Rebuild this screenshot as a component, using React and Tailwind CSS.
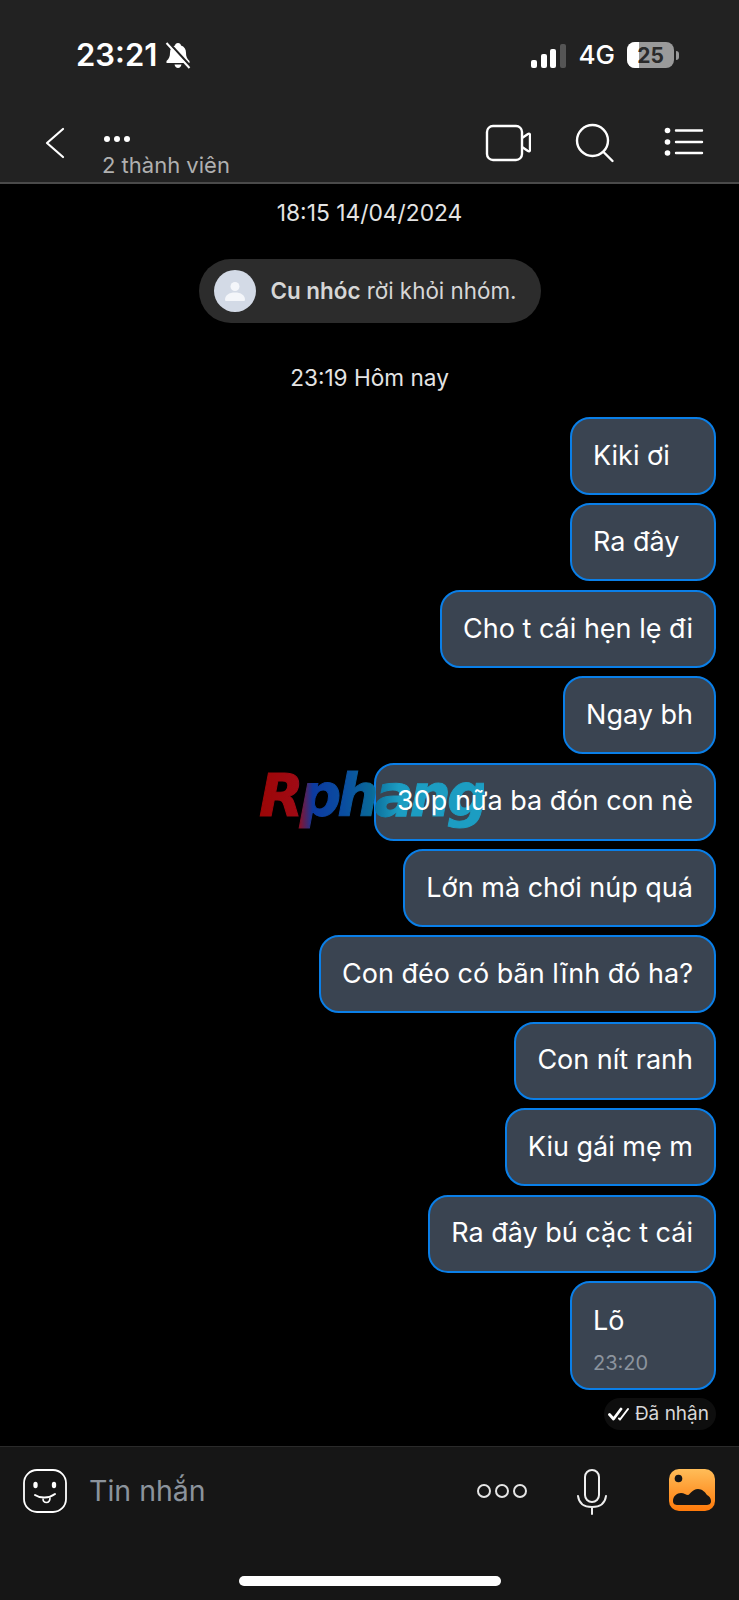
import React from 'react';

const messages = [
  'Kiki ơi',
  'Ra đây',
  'Cho t cái hẹn lẹ đi',
  'Ngay bh',
  '30p nữa ba đón con nè',
  'Lớn mà chơi núp quá',
  'Con đéo có bãn lĩnh đó ha?',
  'Con nít ranh',
  'Kiu gái mẹ m',
  'Ra đây bú cặc t cái',
];

function StatusBar() {
  return (
    <div className="h-[106px] flex items-start justify-between pt-[37px] pl-[76px] pr-[60px]">
      <div className="flex items-center gap-[8px]">
        <span className="text-[31px] leading-[36px] font-semibold text-white">23:21</span>
        <svg width="26" height="27" viewBox="0 0 26 27" className="mt-[1px]">
          <path d="M13 1c1.800 0 2.800 1 3 2.500 3.300 1 5 3.800 5 7.200 0 3.600.8 5.800 3.500 8.300v2H1.500v-2C4.200 16.500 5 14.300 5 10.700c0-3.400 1.700-6.200 5-7.200C10.200 2 11.200 1 13 1z" fill="white" />
          <path d="M9.500 22.500h7c-.3 2-1.700 3.400-3.500 3.400s-3.200-1.400-3.500-3.400z" fill="white" />
          <path d="M3.500 0.500l23 25" stroke="#222222" strokeWidth="2.500" />
          <path d="M1.500 1l23 25" stroke="white" strokeWidth="2" />
        </svg>
      </div>
      <div className="flex items-center h-[36px]">
        <div className="flex items-end gap-[3.500px] h-[25px]">
          <div className="w-[6px] h-[8px] rounded-[2px] bg-white" />
          <div className="w-[6px] h-[14px] rounded-[2px] bg-white" />
          <div className="w-[6px] h-[19px] rounded-[2px] bg-white" />
          <div className="w-[6px] h-[24px] rounded-[2px] bg-[#555555]" />
        </div>
        <span className="ml-[13px] text-[26px] font-medium text-white leading-[36px]">4G</span>
        <div className="ml-[12px] flex items-center">
          <div className="relative w-[47px] h-[26px] rounded-[8px] bg-[#9a9a9a] overflow-hidden flex items-center justify-center">
            <div className="absolute left-0 top-0 bottom-0 w-[12px] bg-white" />
            <span className="relative text-[21px] font-bold leading-none text-[#2a2a2a]">25</span>
          </div>
          <div className="ml-[2px] w-[3px] h-[9px] rounded-r-full bg-[#9a9a9a]" />
        </div>
      </div>
    </div>
  );
}

function NavBar() {
  return (
    <div className="h-[78px] border-b-2 border-[#4a4a4a] flex items-start justify-between">
      <div className="flex items-start">
        <svg width="22" height="32" viewBox="0 0 22 32" fill="none" className="ml-[44px] mt-[21px]">
          <path d="M19 2L3 16l16 14" stroke="white" strokeWidth="2.200" strokeLinecap="round" strokeLinejoin="round" />
        </svg>
        <div className="ml-[36px]">
          <div className="flex gap-[4px] ml-[2px] mt-[29px] h-[8px] items-center">
            <div className="w-[6px] h-[6px] rounded-full bg-white" />
            <div className="w-[6px] h-[6px] rounded-full bg-white" />
            <div className="w-[6px] h-[6px] rounded-full bg-white" />
          </div>
          <div className="text-[22px] leading-[28px] mt-[8px] text-[#b0b0b0]">2 thành viên</div>
        </div>
      </div>
      <div className="flex items-start mr-[35px]">
        <svg width="46" height="38" viewBox="0 0 46 38" fill="none" className="mt-[18px]">
          <path d="M8 2h23a6 6 0 0 1 6 6v22a6 6 0 0 1-6 6H8a6 6 0 0 1-6-6V8a6 6 0 0 1 6-6z" stroke="white" strokeWidth="2.400" />
          <path d="M37 14l6-4c1-.6 2 0 2 1v15c0 1-1 1.600-2 1l-6-4" stroke="white" strokeWidth="2.400" strokeLinejoin="round" />
        </svg>
        <svg width="40" height="40" viewBox="0 0 40 40" fill="none" className="ml-[44px] mt-[17px]">
          <circle cx="17.500" cy="17.500" r="15.500" stroke="white" strokeWidth="2.400" />
          <path d="M28.500 29l9 9" stroke="white" strokeWidth="2.400" strokeLinecap="round" />
        </svg>
        <svg width="40" height="30" viewBox="0 0 40 30" fill="none" className="ml-[49px] mt-[21px]">
          <circle cx="3.500" cy="3.500" r="2.800" fill="white" />
          <circle cx="3.500" cy="15" r="2.800" fill="white" />
          <circle cx="3.500" cy="26" r="2.800" fill="white" />
          <path d="M12 3.500h26M12 15h26M12 26h26" stroke="white" strokeWidth="2.400" strokeLinecap="round" />
        </svg>
      </div>
    </div>
  );
}

function Bubble({ children }) {
  return (
    <div className="h-[78px] min-w-[146px] flex items-center px-[21px] rounded-[20px] border-2 border-[#0a7fe8] bg-[#3a4451] text-[27px] text-white whitespace-nowrap">
      <span className="relative z-10">{children}</span>
    </div>
  );
}

function Composer() {
  return (
    <div className="h-[154px] bg-[#161616] border-t border-[#2a2a2a] relative">
      <div className="flex items-start h-[70px] pt-[22px]">
        <svg width="44" height="44" viewBox="0 0 44 44" fill="none" className="ml-[23px]">
          <rect x="1" y="1" width="42" height="42" rx="13" stroke="white" strokeWidth="1.800" />
          <ellipse cx="12.500" cy="16" rx="2.200" ry="3.200" fill="white" />
          <ellipse cx="31" cy="16" rx="2.200" ry="3.200" fill="white" />
          <path d="M12 26c5 3.500 14 3.500 20-1" stroke="white" strokeWidth="2" strokeLinecap="round" />
          <path d="M20 29.500c0 2.500 1.500 4 3.500 4s3.700-1.800 3.500-5" stroke="white" strokeWidth="1.600" fill="none" />
        </svg>
        <span className="ml-[22px] text-[28.500px] leading-[44px] text-[#8b939c]">Tin nhắn</span>
        <div className="ml-auto flex items-start">
          <div className="flex gap-[4px] mt-[15px]">
            <div className="w-[14px] h-[14px] rounded-full border-2 border-[#e5e5e5]" />
            <div className="w-[14px] h-[14px] rounded-full border-2 border-[#e5e5e5]" />
            <div className="w-[14px] h-[14px] rounded-full border-2 border-[#e5e5e5]" />
          </div>
          <svg width="30" height="46" viewBox="0 0 30 46" fill="none" className="ml-[50px]">
            <rect x="8" y="1" width="14" height="32" rx="7" stroke="#eeeeee" strokeWidth="2" />
            <path d="M1 27c1 8 7 11 14 11s13-3 14-11M15 38v7" stroke="#eeeeee" strokeWidth="2" strokeLinecap="round" />
          </svg>
          <svg width="46" height="42" viewBox="0 0 46 42" className="ml-[62px] mr-[24px]">
            <defs>
              <linearGradient id="photoFill" x1="0" y1="0" x2="0" y2="1">
                <stop offset="0" stopColor="#ffbd59" />
                <stop offset="1" stopColor="#ff7a0a" />
              </linearGradient>
            </defs>
            <rect width="46" height="42" rx="10" fill="url(#photoFill)" />
            <circle cx="9.500" cy="9.500" r="3.800" fill="#161616" />
            <path d="M4 32c0-5 4-8 8-8 3 0 5 2 7 2s4-6 10-6c4 0 7 3 9 6 2 1 4 3 4 6 0 3-2 4-5 4H9c-3 0-5-1-5-4z" fill="#161616" />
          </svg>
        </div>
      </div>
      <div className="absolute left-[239px] top-[129px] w-[262px] h-[10px] rounded-full bg-white" />
    </div>
  );
}

export default function App() {
  return (
    <div className="relative w-[739px] h-[1600px] bg-black flex flex-col overflow-hidden font-['Inter','Noto_Sans',sans-serif]">
      <div className="bg-[#222222]">
        <StatusBar />
        <NavBar />
      </div>

      <div className="flex-1 flex flex-col">
        <div className="text-center text-[22.800px] leading-[28px] text-[#e4e4e4] mt-[15px]">18:15 14/04/2024</div>
        <div className="self-center mt-[32px] h-[64px] w-[342px] rounded-full bg-[#2c2c2c] flex items-center pl-[15px]">
          <div className="w-[42px] h-[42px] rounded-full bg-[#d3dae6] flex items-center justify-center">
            <svg width="22" height="22" viewBox="0 0 22 22">
              <circle cx="11" cy="6.500" r="4.500" fill="#f4f6fa" />
              <path d="M1 20c0-5 4-7.500 10-7.500S21 15 21 20c0 1-1 1-2 1H3c-1 0-2 0-2-1z" fill="#f4f6fa" />
            </svg>
          </div>
          <span className="ml-[15px] text-[22.400px] text-[#d6d6d6] whitespace-nowrap"><b className="font-semibold">Cu nhóc</b> rời khỏi nhóm.</span>
        </div>
        <div className="text-center text-[22.600px] leading-[28px] text-[#e4e4e4] mt-[41px]">23:19 Hôm nay</div>

        <div className="flex flex-col items-end gap-[8.400px] mt-[25px] pr-[23px]">
          {messages.map((text) => (
            <Bubble key={text}>{text}</Bubble>
          ))}
          <div className="h-[109px] flex flex-col pt-[19px] px-[21px] rounded-[20px] border-2 border-[#0a7fe8] bg-[#3a4451] w-[146px]">
            <span className="text-[27px] leading-[38px] text-white">Lõ</span>
            <span className="text-[20px] leading-[26px] mt-[10px] text-[#8c949e]">23:20</span>
          </div>
        </div>
        <div className="self-end mt-[8px] mr-[23px] h-[32px] flex items-center gap-[5px] pl-[4px] pr-[7px] rounded-full bg-[#0e0e0e]">
          <svg width="22" height="14" viewBox="0 0 22 14" fill="none">
            <path d="M1.500 7.500l4 4.500L13 2" stroke="white" strokeWidth="2.800" strokeLinecap="round" strokeLinejoin="round" />
            <path d="M11 11.500l1 1L20 2" stroke="white" strokeWidth="2" strokeLinecap="round" strokeLinejoin="round" />
          </svg>
          <span className="text-[19px] text-[#d8d8d8]">Đã nhận</span>
        </div>
      </div>

      <Composer />

      {/* watermark sits over the bubbles but under the message text */}
      <div className="absolute z-[5] left-[259px] top-[760px] text-[58px] leading-[72px] font-bold italic tracking-[-4px] text-transparent bg-clip-text [-webkit-text-stroke:1px_transparent] bg-[linear-gradient(90deg,#9c0606_0%,#a00a14_17%,#0c3aa0_24%,#0a4ea0_38%,#0a6a98_50%,#1c9dc2_62%,#1c9dc2_100%)] font-['DejaVu_Sans',sans-serif]">
        Rphang
      </div>
    </div>
  );
}
